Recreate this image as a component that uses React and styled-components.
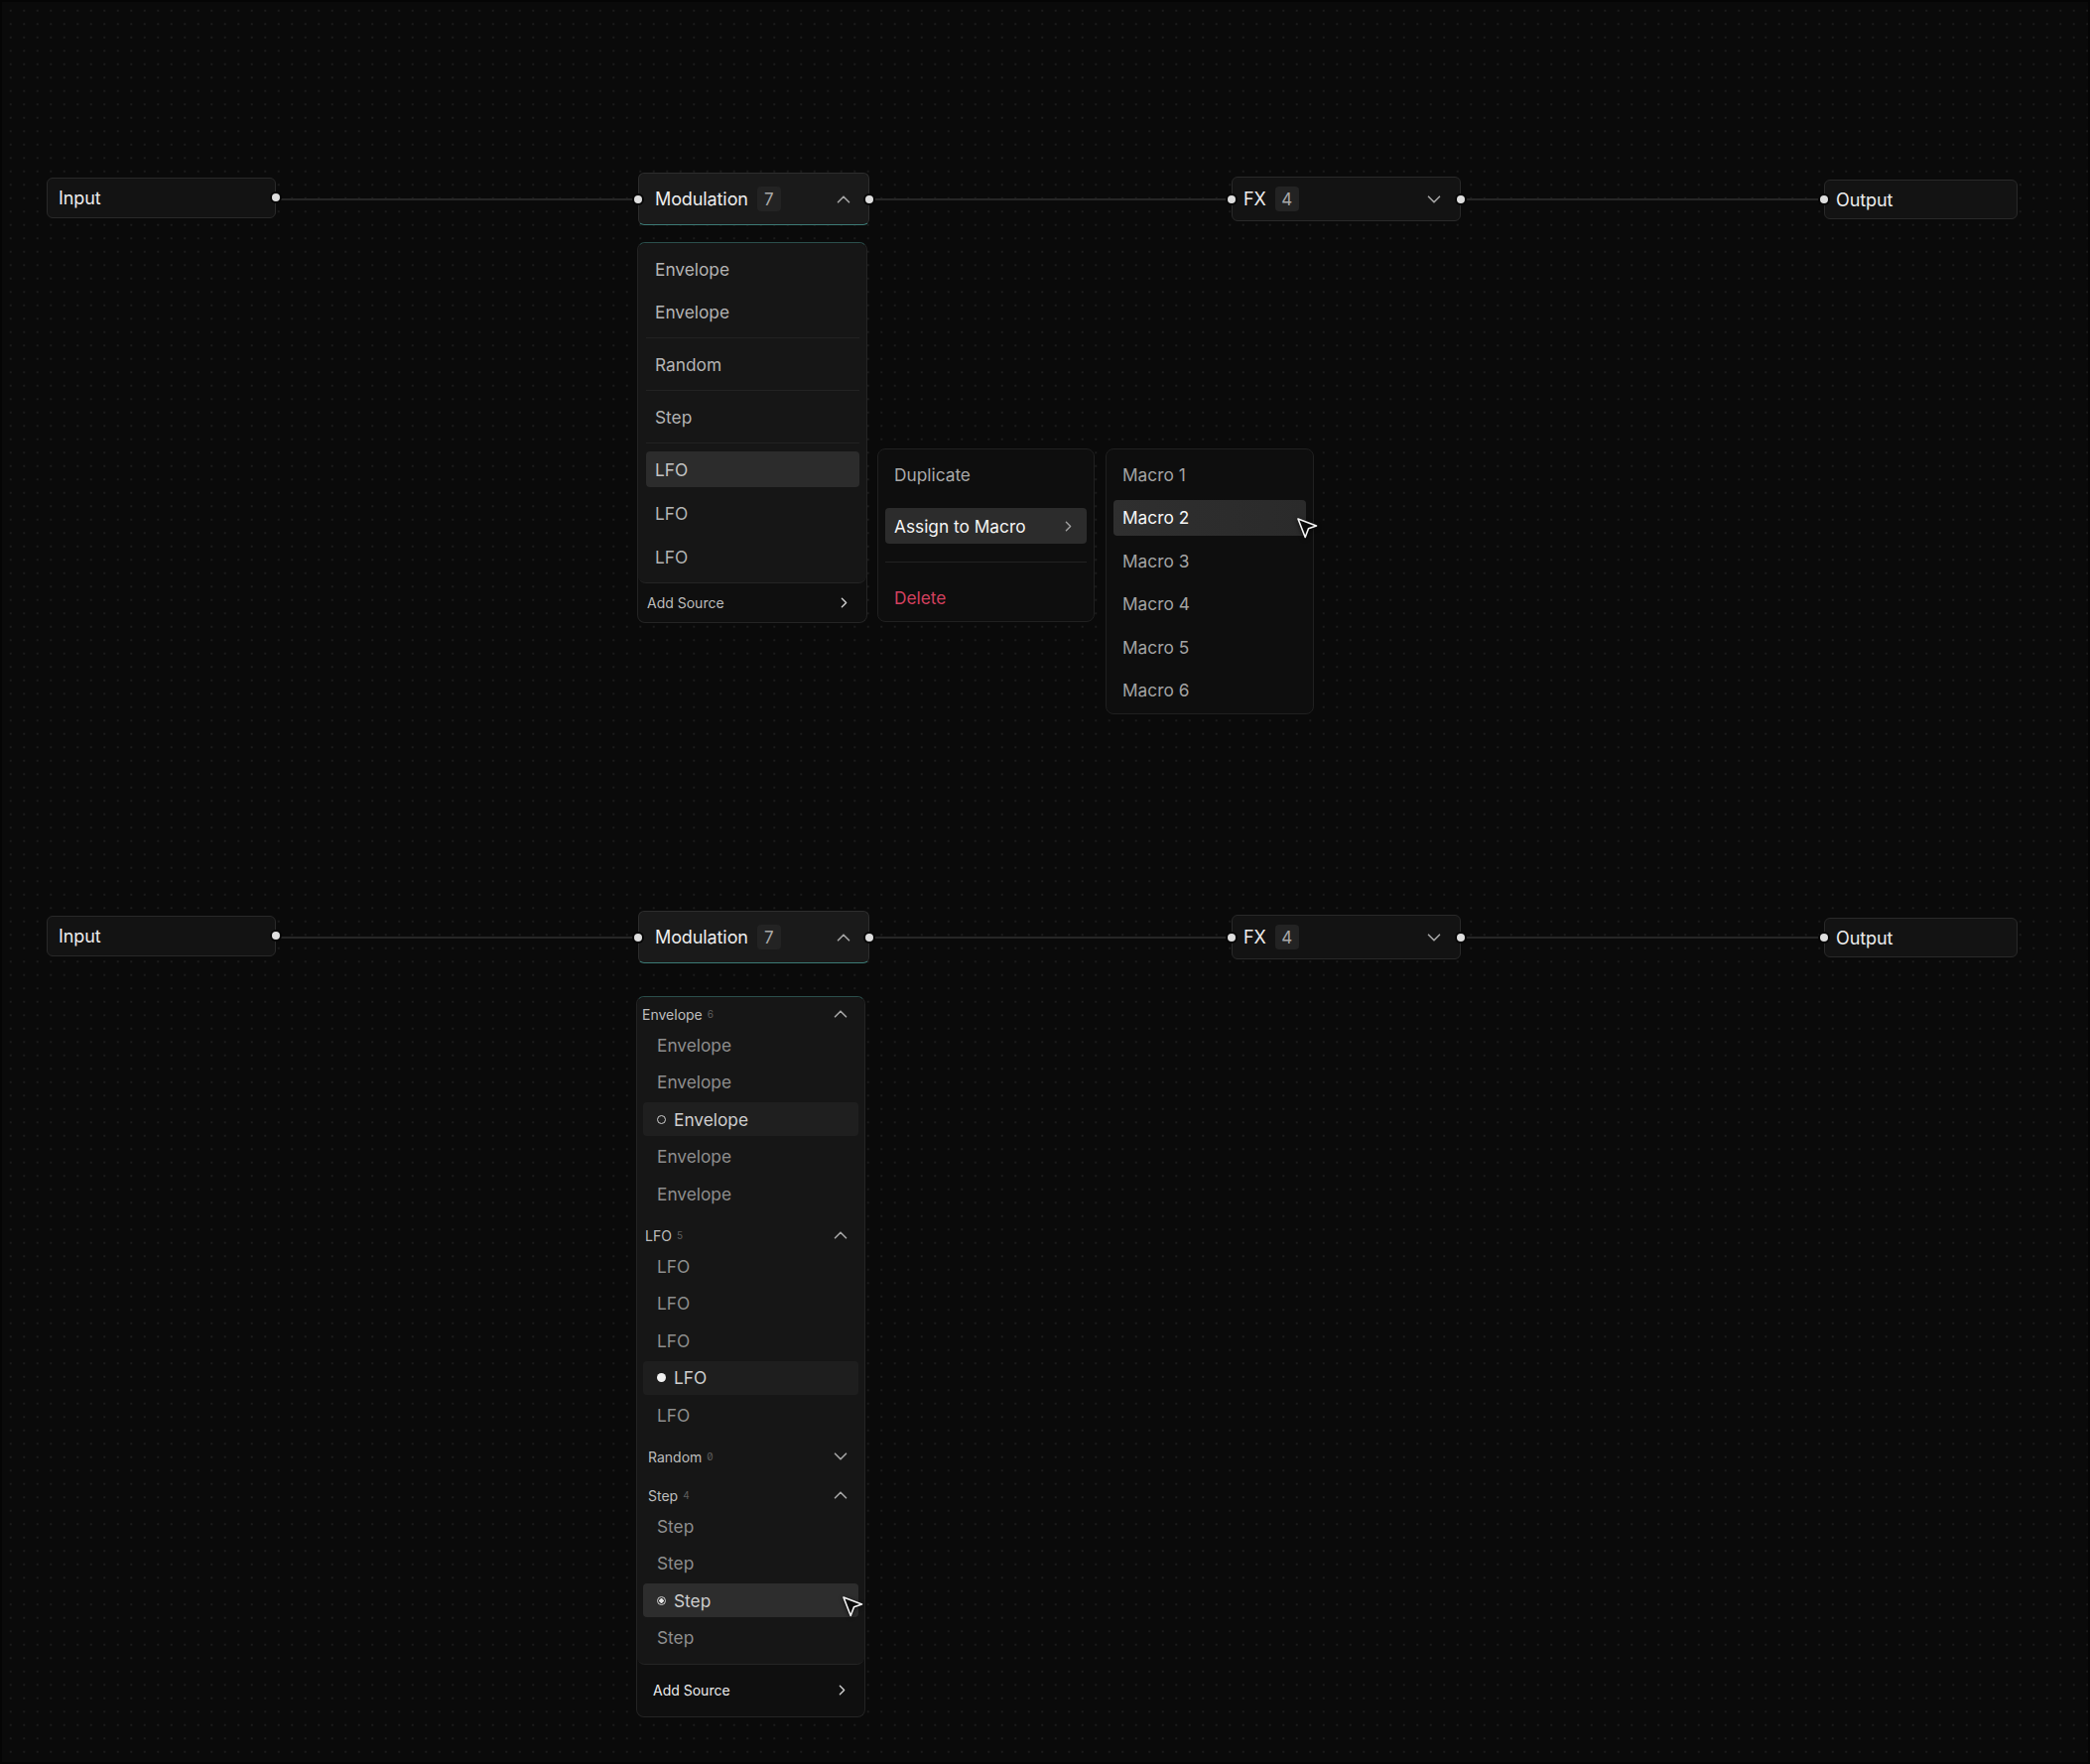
import React from 'react';
import styled, { createGlobalStyle } from 'styled-components';
import { ChevronUp, ChevronDown, ChevronRight } from 'lucide-react';

const GlobalStyle = createGlobalStyle`
	html, body {
		margin: 0;
		padding: 0;
		background: #0a0a0a;
	}
	body {
		font-family: Inter, "Noto Sans", sans-serif;
		-webkit-font-smoothing: antialiased;
	}
`;

const Canvas = styled.div`
	width: 2106px;
	height: 1778px;
	box-sizing: border-box;
	padding: 174px 0 0 47px;
	display: flex;
	flex-direction: column;
	gap: 290px;
	overflow: hidden;
	background-color: #0a0a0a;
	background-image: radial-gradient(circle, #1c1c1c 0.9px, transparent 1.3px);
	background-size: 13.5px 13.5px;
	background-position: 4px 4px;
	box-shadow: inset 0 0 0 2px #050505;
`;

const Flow = styled.section`
	display: grid;
	grid-template-columns: 231px 365px 233px 365px 231px 366px 195px;
	grid-template-rows: 53px auto;
	row-gap: ${p => p.$drop}px;
	align-items: center;
`;

const Node = styled.div`
	position: relative;
	box-sizing: border-box;
	height: ${p => p.$h}px;
	margin-bottom: ${p => p.$lift || 0}px;
	display: flex;
	align-items: center;
	padding: 0 ${p => p.$pr || 11}px 0 ${p => p.$pl || 11}px;
	background: ${p => (p.$active ? '#1a1a1a' : '#131313')};
	border: 1px solid ${p => (p.$active ? '#2d2d2d' : '#292929')};
	border-bottom-color: ${p => (p.$active ? '#3c7a75' : '#292929')};
	border-radius: 6px;
	color: #ededed;
	font-size: 18px;
	letter-spacing: -0.1px;
`;

const Port = styled.span`
	position: absolute;
	top: 50%;
	${p => p.$side}: -5px;
	width: 8px;
	height: 8px;
	margin-top: -4px;
	border-radius: 50%;
	background: #dedede;
	box-shadow: 0 0 0 2px #060606;
`;

const Badge = styled.span`
	margin-left: 9px;
	width: 24px;
	height: 25px;
	border-radius: 4px;
	background: #232323;
	color: #a8a8a8;
	font-size: 17px;
	display: flex;
	align-items: center;
	justify-content: center;
`;

const Caret = styled.span`
	margin-left: auto;
	display: flex;
	color: #a6a6a6;
`;

const Wire = styled.div`
	height: 2px;
	background: #262626;
`;

const Dropdown = styled.div`
	grid-column: 3;
	align-self: start;
	position: relative;
	width: ${p => p.$w}px;
	margin-left: ${p => p.$shift || 0}px;
	box-sizing: border-box;
	background: #0f0f0f;
	border: 1px solid #242424;
	border-top-color: #2b4f4c;
	border-radius: 8px;
`;

const Panel = styled.div`
	display: flex;
	flex-direction: column;
	padding: ${p => p.$pad};
	gap: ${p => p.$gap || 0}px;
	background: #161616;
	border-bottom: 1px solid #242424;
	border-radius: 8px;
`;

const Group = styled.div`
	display: flex;
	flex-direction: column;
	gap: ${p => p.$gap || 0}px;
	padding: ${p => p.$pad || 0};
`;

const Divider = styled.div`
	height: 1px;
	background: #222222;
	margin: ${p => p.$m};
`;

const Item = styled.div`
	position: relative;
	height: ${p => p.$h || 36}px;
	display: flex;
	align-items: center;
	gap: 8px;
	padding-left: ${p => p.$pl || 9}px;
	padding-right: 10px;
	border-radius: 4px;
	font-size: 17.3px;
	color: ${p => p.$color || '#b4b4b4'};
	background: ${p => p.$bg || 'transparent'};
`;

const Footer = styled.div`
	height: ${p => p.$h}px;
	display: flex;
	align-items: center;
	padding: 0 14px 0 ${p => p.$pl}px;
	font-size: 14px;
	color: ${p => p.$color};
`;

const Menu = styled.div`
	position: absolute;
	top: ${p => p.$top}px;
	left: ${p => p.$left}px;
	width: ${p => p.$w}px;
	box-sizing: border-box;
	display: flex;
	flex-direction: column;
	padding: ${p => p.$pad};
	background: #0e0e0e;
	border: 1px solid #202020;
	border-radius: 8px;
	z-index: 2;
`;

const Header = styled.div`
	height: 28px;
	display: flex;
	align-items: center;
	margin-left: -1px;
	padding: 0 7px 0 ${p => p.$indent}px;
	font-size: 14px;
	color: #bdbdbd;
`;

const Count = styled.span`
	margin-left: 5px;
	font-size: 10px;
	color: #5e5e5e;
	font-feature-settings: 'zero' 1;
`;

const Mark = styled.span`
	width: 9px;
	height: 9px;
	box-sizing: border-box;
	border-radius: 50%;
	flex: none;
	border: ${p => (p.$kind === 'fill' ? 'none' : '1.5px solid #cfcfcf')};
	background: ${p =>
		p.$kind === 'fill'
			? '#f2f2f2'
			: p.$kind === 'radio'
			? 'radial-gradient(circle, #e8e8e8 0 2px, transparent 2.4px)'
			: 'transparent'};
`;

const Pointer = styled.svg`
	position: absolute;
	left: ${p => p.$x}px;
	top: ${p => p.$y}px;
	filter: drop-shadow(0 1px 2px rgba(0, 0, 0, 0.7));
	z-index: 3;
`;

const Cursor = ({ x, y }) => (
	<Pointer $x={x} $y={y} width="24" height="24" viewBox="0 0 24 24">
		<path d="M2 2 L20.5 9 L12.5 11.8 L9.2 20.5 Z" fill="#0a0a0a" stroke="#f4f4f4" strokeWidth="1.6" strokeLinejoin="round" />
	</Pointer>
);

const NodeRow = ({ drop, children }) => (
	<Flow $drop={drop}>
		<Node $h={41} $lift={3}>
			Input
			<Port $side="right" />
		</Node>
		<Wire />
		<Node $h={53} $active $pl={16} $pr={14}>
			<Port $side="left" />
			Modulation
			<Badge>7</Badge>
			<Caret><ChevronUp size={22} strokeWidth={1.8} /></Caret>
			<Port $side="right" />
		</Node>
		<Wire />
		<Node $h={45} $pr={15}>
			<Port $side="left" />
			FX
			<Badge>4</Badge>
			<Caret><ChevronDown size={22} strokeWidth={1.8} /></Caret>
			<Port $side="right" />
		</Node>
		<Wire />
		<Node $h={40} $lift={-1}>
			<Port $side="left" />
			Output
		</Node>
		{children}
	</Flow>
);

const macros = ['Macro 1', 'Macro 2', 'Macro 3', 'Macro 4', 'Macro 5', 'Macro 6'];

const ContextMenus = () => (
	<Menu $top={207} $left={241} $w={219} $pad="7px 7px 6px 7px">
		<Group $gap={16}>
			<Item $color="#a9a9a9">Duplicate</Item>
			<Item $color="#f4f4f4" $bg="#2c2c2c">
				Assign to Macro
				<Caret><ChevronRight size={17} strokeWidth={2} color="#a0a0a0" /></Caret>
			</Item>
		</Group>
		<Divider $m="18px 0 17px" />
		<Item $color="#d4415f">Delete</Item>
		<Menu $top={-1} $left={229} $w={210} $pad="7px 7px 5px 7px">
			<Group $gap={7.5}>
				{macros.map(m =>
					m === 'Macro 2' ? (
						<Item key={m} $color="#f6f6f6" $bg="linear-gradient(90deg, #2f2f2f, #2a2a2a)">
							{m}
							<Cursor x={184} y={17} />
						</Item>
					) : (
						<Item key={m} $color="#a3a3a3">{m}</Item>
					)
				)}
			</Group>
		</Menu>
	</Menu>
);

const CompactList = () => (
	<Dropdown $w={232} $shift={-1}>
		<Panel $pad="0 7px 0 8px">
			<Group $gap={7} $pad="8px 0">
				<Item>Envelope</Item>
				<Item>Envelope</Item>
			</Group>
			<Divider $m="0" />
			<Group $pad="8px 0">
				<Item>Random</Item>
			</Group>
			<Divider $m="0" />
			<Group $pad="8px 0">
				<Item>Step</Item>
			</Group>
			<Divider $m="0" />
			<Group $gap={8} $pad="8px 0">
				<Item $bg="#2c2c2c" $color="#c4c4c4">LFO</Item>
				<Item>LFO</Item>
				<Item>LFO</Item>
			</Group>
		</Panel>
		<Footer $h={39} $pl={9} $color="#bcbcbc">
			Add Source
			<Caret><ChevronRight size={17} strokeWidth={2} color="#cfcfcf" /></Caret>
		</Footer>
		<ContextMenus />
	</Dropdown>
);

const groups = [
	{ name: 'Envelope', count: 6, indent: 0, open: true, items: ['', '', 'ring', '', ''] },
	{ name: 'LFO', count: 5, indent: 3, open: true, items: ['', '', '', 'fill', ''] },
	{ name: 'Random', count: 0, indent: 6, open: false, items: [] },
	{ name: 'Step', count: 4, indent: 6, open: true, items: ['', '', 'radio', ''] },
];

const markBg = { ring: '#1f1f1f', fill: '#1e1e1e', radio: '#2d2d2d' };

const GroupedList = () => (
	<Dropdown $w={231} $shift={-2}>
		<Panel $pad="3px 6px 9px 6px" $gap={11}>
			{groups.map(g => (
				<div key={g.name}>
					<Header $indent={g.indent}>
						{g.name}
						<Count>{g.count}</Count>
						<Caret>
							{g.open ? <ChevronUp size={22} strokeWidth={1.8} /> : <ChevronDown size={22} strokeWidth={1.8} />}
						</Caret>
					</Header>
					{g.open && (
						<Group $gap={3.5}>
							{g.items.map((kind, i) =>
								kind ? (
									<Item key={i} $h={34} $pl={14} $bg={markBg[kind]} $color="#cfcfcf">
										<Mark $kind={kind} />
										{g.name}
										{kind === 'radio' && <Cursor x={200} y={12} />}
									</Item>
								) : (
									<Item key={i} $h={34} $pl={14} $color="#8e8e8e">{g.name}</Item>
								)
							)}
						</Group>
					)}
				</div>
			))}
		</Panel>
		<Footer $h={52} $pl={16} $color="#ececec">
			Add Source
			<Caret><ChevronRight size={17} strokeWidth={2} color="#cfcfcf" /></Caret>
		</Footer>
	</Dropdown>
);

export default function App() {
	return (
		<>
			<GlobalStyle />
			<Canvas>
				<NodeRow drop={17}>
					<CompactList />
				</NodeRow>
				<NodeRow drop={33}>
					<GroupedList />
				</NodeRow>
			</Canvas>
		</>
	);
}
